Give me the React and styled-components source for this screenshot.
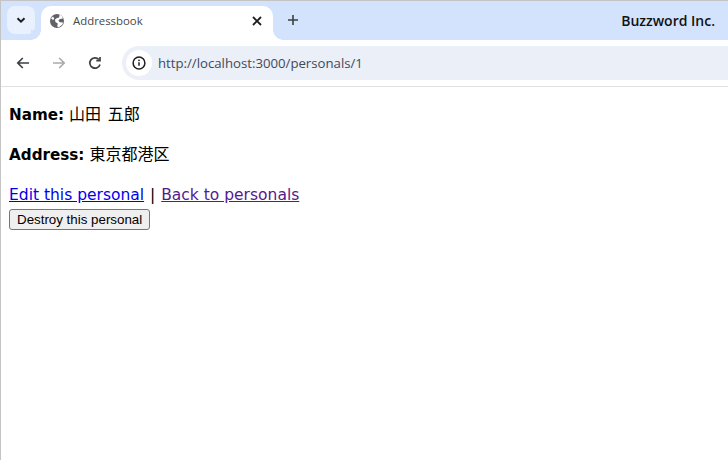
import React from 'react';
import styled, { createGlobalStyle } from 'styled-components';

const GlobalStyle = createGlobalStyle`
  html, body {
    margin: 0;
    padding: 0;
    background: #fff;
  }
`;

const Window = styled.div`
  width: 728px;
  height: 460px;
  box-sizing: border-box;
  border-top: 1px solid #c4c4c4;
  border-left: 1px solid #c4c4c4;
  overflow: hidden;
  background: #fff;
`;

const TabStrip = styled.div`
  height: 39px;
  background: #d3e3fd;
  display: flex;
  align-items: flex-start;
  font-family: "Open Sans", "Noto Sans", sans-serif;
`;

const TabSearch = styled.button`
  width: 28px;
  height: 28px;
  margin: 5px 6px 0 6px;
  padding: 0;
  border: 0;
  border-radius: 8px;
  background: #e9f0fe;
  display: flex;
  align-items: center;
  justify-content: center;
`;

const Tab = styled.div`
  position: relative;
  width: 232px;
  height: 34px;
  margin-top: 5px;
  box-sizing: border-box;
  padding: 0 10px 5px 8px;
  background: #fff;
  border-radius: 10px 10px 0 0;
  display: flex;
  align-items: center;
  gap: 8px;

  &::before, &::after {
    content: '';
    position: absolute;
    bottom: 0;
    width: 10px;
    height: 10px;
  }
  &::before {
    left: -10px;
    background: radial-gradient(circle at 0 0, #d3e3fd 9.5px, #fff 10px);
  }
  &::after {
    right: -10px;
    background: radial-gradient(circle at 100% 0, #d3e3fd 9.5px, #fff 10px);
  }
`;

const TabTitle = styled.span`
  flex: 1;
  font-size: 11.4px;
  color: #474747;
`;

const NewTab = styled.div`
  width: 28px;
  height: 28px;
  margin: 5px 0 0 6px;
  display: flex;
  align-items: center;
  justify-content: center;
`;

const Profile = styled.div`
  margin-left: auto;
  margin-right: 13px;
  height: 39px;
  line-height: 39px;
  font-size: 14px;
  font-weight: 600;
  color: #111;
`;

const Toolbar = styled.div`
  height: 46px;
  background: #fff;
  border-bottom: 1px solid #e0e0e0;
  border-top-left-radius: 8px;
  display: flex;
  align-items: center;
  padding-left: 8px;
`;

const NavButton = styled.div`
  width: 28px;
  height: 28px;
  margin-right: 8px;
  display: flex;
  align-items: center;
  justify-content: center;
`;

const Omnibox = styled.div`
  flex: 1;
  height: 34px;
  margin-left: 5px;
  margin-right: -20px;
  border-radius: 17px 0 0 17px;
  background: #ebeff8;
  display: flex;
  align-items: center;
  padding-left: 4px;
  gap: 6px;
`;

const InfoChip = styled.div`
  width: 26px;
  height: 26px;
  border-radius: 50%;
  background: #fff;
  display: flex;
  align-items: center;
  justify-content: center;
`;

const Url = styled.span`
  font-family: "Open Sans", "Noto Sans", sans-serif;
  font-size: 13.2px;
  color: #3f4a5a;
`;

const Page = styled.main`
  padding: 8px;
  font-family: "DejaVu Sans", "Noto Sans CJK JP", sans-serif;
  font-size: 15.5px;
  line-height: 24px;
  color: #000;
`;

const Field = styled.p`
  margin: 8px 0 16px;
  height: 24px;
`;

const Label = styled.strong`
  font-weight: 700;
  font-size: 15.2px;
`;

const Cjk = styled.span`
  font-family: "Noto Sans CJK JP", sans-serif;
  font-size: 16px;
  line-height: 1;
  word-spacing: 3px;
`;

const Links = styled.div`
  height: 24px;
`;

const Separator = styled.span`
  margin: 0 1px;
`;

const PageLink = styled.a`
  color: ${p => (p.$visited ? '#551a8b' : '#0000ee')};
  text-decoration: underline;
`;

const DangerButton = styled.button`
  display: block;
  height: 21px;
  margin-top: 2px;
  padding: 1px 7px;
  box-sizing: border-box;
  font-family: "Liberation Sans", Arial, sans-serif;
  font-size: 13.33px;
  color: #000;
  background: #efefef;
  border: 1px solid #767676;
  border-radius: 3px;
`;

const Chevron = () => (
  <svg width="12" height="12" viewBox="0 0 12 12" fill="none" stroke="#1f1f1f" strokeWidth="2">
    <path d="M2.5 4.2 6 7.7l3.5-3.5" />
  </svg>
);

const Globe = () => (
  <svg width="16" height="16" viewBox="0 0 16 16">
    <circle cx="8" cy="8" r="7" fill="#5f6368" />
    <path d="M10.5 1.6 12.8 3l1.2 2.4-3 .6-1.6 1.6 1.4 1.6 3.4.4-1 2.2-3.4 2.4-1.6-.6.6-3-2.4-1.6-.4-2.4 2-1.6 2.2-.4z" fill="#fff" />
    <path d="M2 5.2 4 3.4l1.2 1.8-1 2z" fill="#fff" />
  </svg>
);

const CloseX = () => (
  <svg width="12" height="12" viewBox="0 0 12 12" stroke="#1f1f1f" strokeWidth="1.8">
    <path d="M2 2l8 8M10 2l-8 8" />
  </svg>
);

const Plus = () => (
  <svg width="14" height="14" viewBox="0 0 14 14" stroke="#3c4043" strokeWidth="1.6">
    <path d="M7 2v10M2 7h10" />
  </svg>
);

const Arrow = ({ color, flip }) => (
  <svg width="16" height="16" viewBox="0 0 16 16" fill="none" stroke={color} strokeWidth="1.7"
    style={flip ? { transform: 'scaleX(-1)' } : undefined}>
    <path d="M14 8H3M7.8 3 2.8 8l5 5" />
  </svg>
);

const Reload = () => (
  <svg width="16" height="16" viewBox="0 0 16 16" fill="none" stroke="#3c4043" strokeWidth="1.7">
    <path d="M13 9.5A5.2 5.2 0 1 1 11.8 4.4" />
    <path d="M13 2v3.7H9.3" />
  </svg>
);

const Info = () => (
  <svg width="16" height="16" viewBox="0 0 16 16" fill="none">
    <circle cx="8" cy="8" r="5.9" stroke="#1f1f1f" strokeWidth="1.5" />
    <path d="M8 7.2v3.6" stroke="#1f1f1f" strokeWidth="1.5" />
    <circle cx="8" cy="5.3" r=".9" fill="#1f1f1f" />
  </svg>
);

const App = () => {
  return (
    <>
      <GlobalStyle />
      <Window>
        <TabStrip>
          <TabSearch><Chevron /></TabSearch>
          <Tab>
            <Globe />
            <TabTitle>Addressbook</TabTitle>
            <CloseX />
          </Tab>
          <NewTab><Plus /></NewTab>
          <Profile>Buzzword Inc.</Profile>
        </TabStrip>
        <Toolbar>
          <NavButton><Arrow color="#3c4043" /></NavButton>
          <NavButton><Arrow color="#a9abad" flip /></NavButton>
          <NavButton><Reload /></NavButton>
          <Omnibox>
            <InfoChip><Info /></InfoChip>
            <Url>http://localhost:3000/personals/1</Url>
          </Omnibox>
        </Toolbar>
        <Page>
          <Field><Label>Name:</Label> <Cjk>山田 五郎</Cjk></Field>
          <Field><Label>Address:</Label> <Cjk>東京都港区</Cjk></Field>
          <Links>
            <PageLink href="#edit">Edit this personal</PageLink> <Separator>|</Separator> <PageLink href="#back" $visited>Back to personals</PageLink>
          </Links>
          <DangerButton>Destroy this personal</DangerButton>
        </Page>
      </Window>
    </>
  );
};

export default App;
